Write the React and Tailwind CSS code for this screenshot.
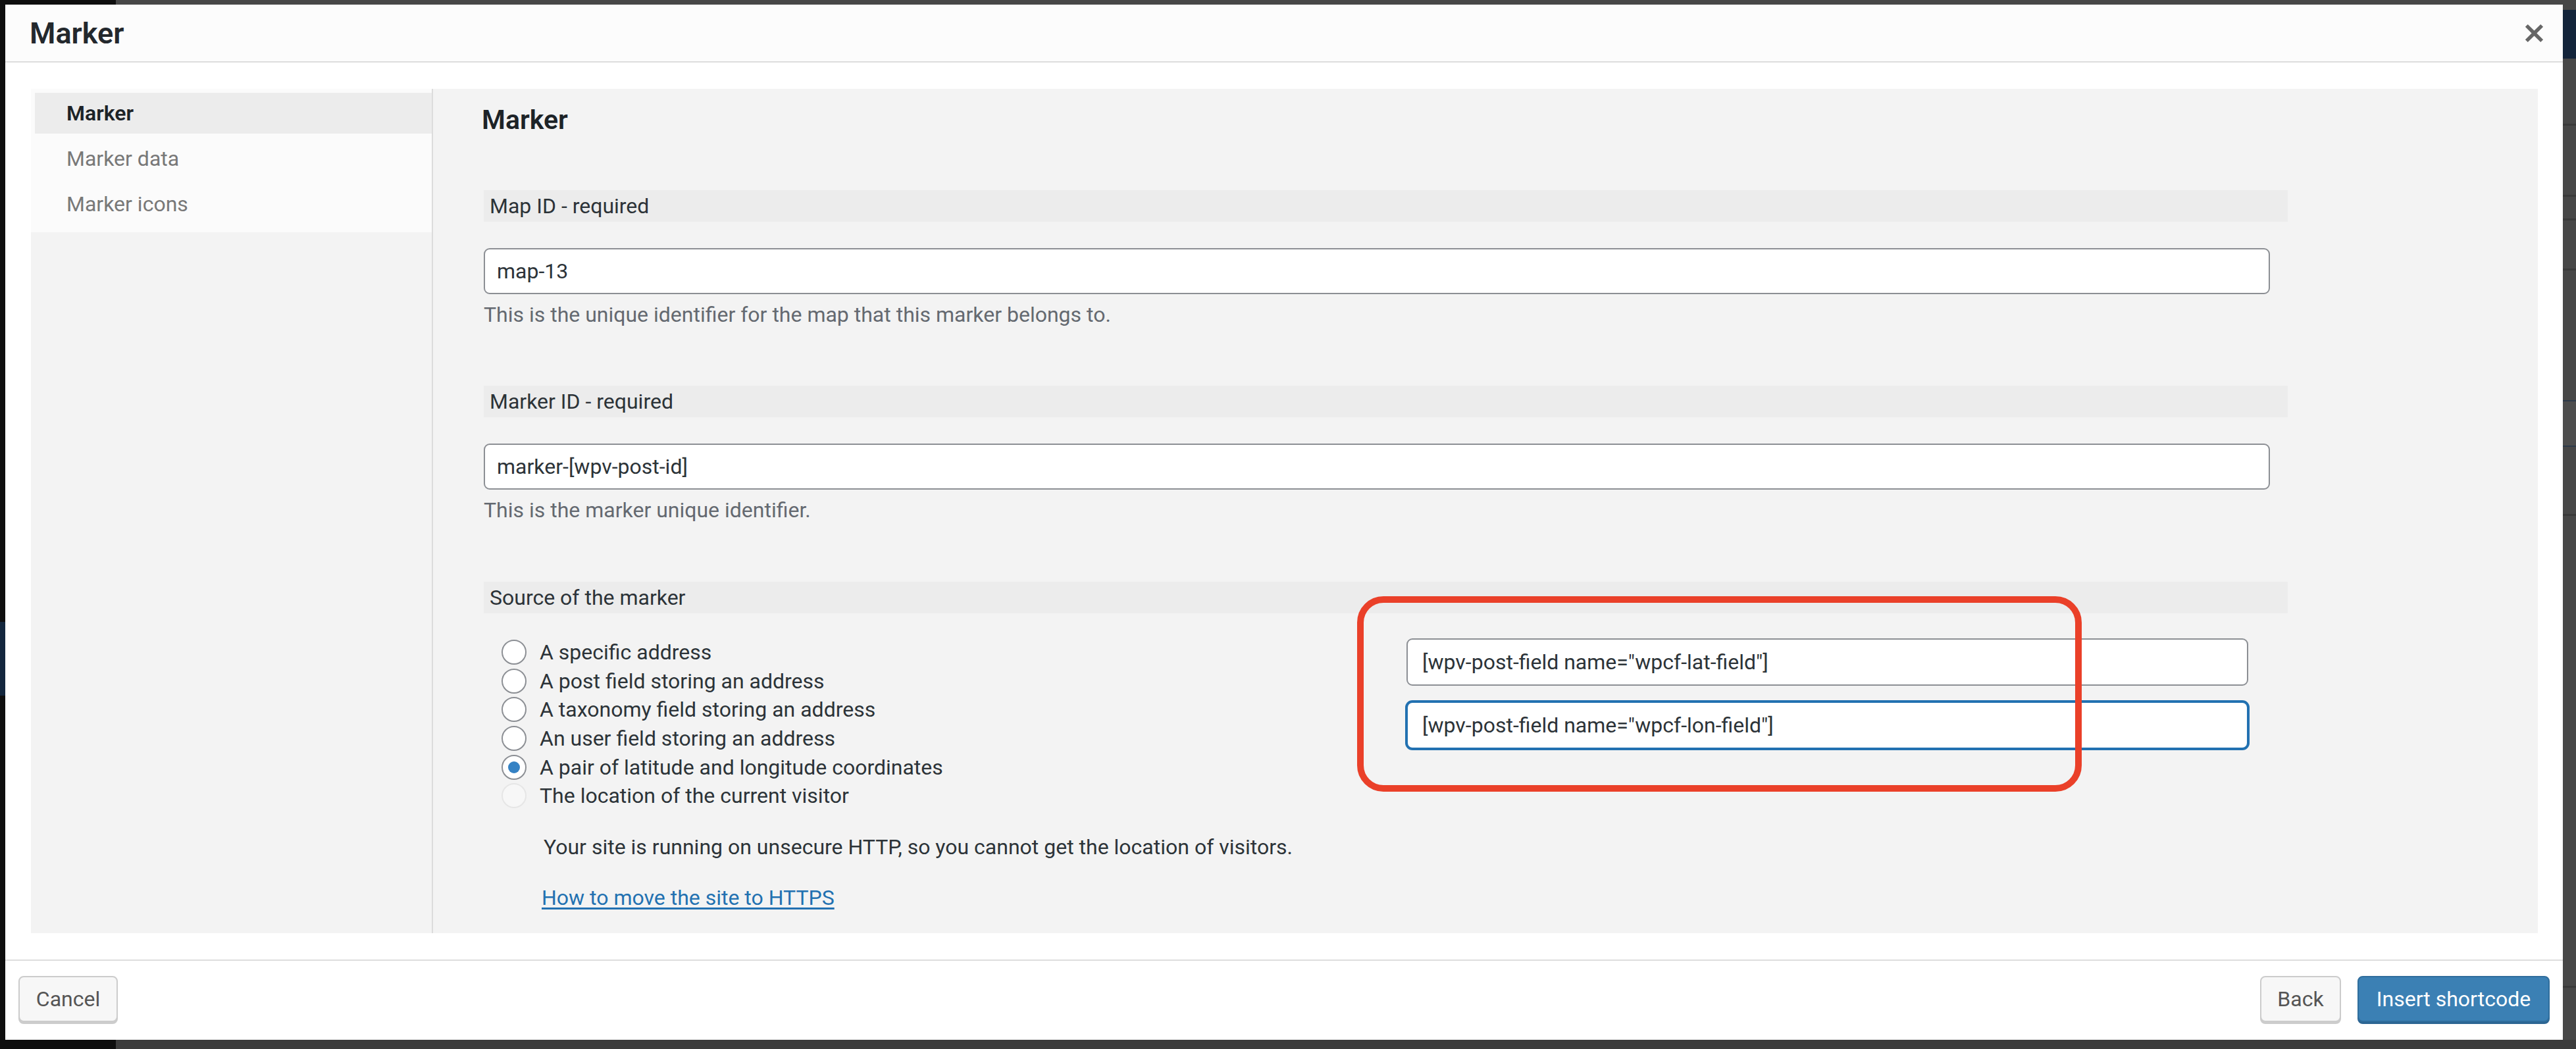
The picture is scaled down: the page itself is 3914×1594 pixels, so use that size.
export default function App() {
  const radios = [
    { label: "A specific address", state: "off" },
    { label: "A post field storing an address", state: "off" },
    { label: "A taxonomy field storing an address", state: "off" },
    { label: "An user field storing an address", state: "off" },
    { label: "A pair of latitude and longitude coordinates", state: "on" },
    { label: "The location of the current visitor", state: "disabled" },
  ];

  return (
    <div className="relative w-[3914px] h-[1594px] overflow-hidden bg-[#474747] font-[Roboto,'Liberation_Sans',sans-serif]">
      {/* page behind the dialog */}
      <div className="absolute left-0 top-0 h-full w-[176px] bg-[#0e0e0e]" />
      <div className="absolute left-0 top-[945px] h-[112px] w-[8px] bg-[#13263d]" />
      <div className="absolute left-[176px] right-0 bottom-0 h-[14px] bg-[#3c3c3c]" />
      <div className="absolute right-0 top-[15px] h-[74px] w-[20px] bg-[#13243a]" />
      <div className="absolute right-0 top-[188px] h-[3px] w-[20px] bg-[#3a3a3a]" />
      <div className="absolute right-0 top-[296px] h-[3px] w-[20px] bg-[#3a3a3a]" />
      <div className="absolute right-0 top-[332px] h-[3px] w-[20px] bg-[#3a3a3a]" />
      <div className="absolute right-0 top-[408px] h-[3px] w-[20px] bg-[#3a3a3a]" />
      <div className="absolute right-0 top-[608px] h-[71px] w-[20px] border-y-2 border-[#2d3a4a] bg-[#4d4d4d]" />
      <div className="absolute right-0 top-[781px] h-[3px] w-[20px] bg-[#3a3a3a]" />
      <div className="absolute right-0 top-[1498px] h-[3px] w-[20px] bg-[#3a3a3a]" />

      {/* dialog */}
      <div className="absolute left-[8px] top-[7px] flex h-[1573px] w-[3886px] flex-col bg-white">
        {/* header */}
        <div className="flex h-[88px] shrink-0 items-center justify-between border-b-2 border-[#dddddd] bg-[#fcfcfc] pl-[37px] pr-[16px]">
          <h1 className="text-[45px] font-semibold leading-none text-[#23282d]">Marker</h1>
          <svg width="55" height="55" viewBox="0 0 20 20" className="fill-[#666666]">
            <path d="M14.95 6.46L11.41 10l3.54 3.54-1.41 1.41L10 11.42l-3.53 3.53-1.42-1.42L8.58 10 5.05 6.47l1.42-1.42L10 8.58l3.54-3.53z" />
          </svg>
        </div>

        {/* body */}
        <div className="flex min-h-0 flex-1 pl-[39px] pr-[38px] pt-[40px] pb-[40px]">
          <div className="flex flex-1 bg-[#f3f3f3]">
            {/* sidebar */}
            <div className="w-[611px] shrink-0 border-r-2 border-[#dcdcdc]">
              <div className="flex flex-col gap-[7px] bg-[#fbfbfb] pt-[6px] pl-[6px] pb-[12px]">
                <div className="flex h-[62px] items-center bg-[#ececec] pl-[48px] text-[32px] font-semibold text-[#1d2327]">
                  Marker
                </div>
                <div className="flex h-[62px] items-center pl-[48px] text-[32px] text-[#787878]">
                  Marker data
                </div>
                <div className="flex h-[62px] items-center pl-[48px] text-[32px] text-[#787878]">
                  Marker icons
                </div>
              </div>
            </div>

            {/* content */}
            <div className="flex flex-1 flex-col pl-[77px] pt-[22px]">
              <h2 className="-ml-[3px] h-[50px] text-[41px] font-semibold leading-[50px] text-[#1d2327]">Marker</h2>

              <div className="mt-[82px] flex h-[48px] w-[2741px] items-center bg-[#ececec] pl-[9px] text-[32px] text-[#2c3338]">
                Map ID - required
              </div>
              <input
                type="text"
                readOnly
                defaultValue="map-13"
                className="mt-[40px] h-[70px] w-[2714px] rounded-[9px] border-2 border-[#8c8f94] bg-white px-[18px] text-[32px] text-[#2c3338] outline-none"
              />
              <p className="mt-[11px] text-[32px] leading-[40px] text-[#646970]">
                This is the unique identifier for the map that this marker belongs to.
              </p>

              <div className="mt-[88px] flex h-[48px] w-[2741px] items-center bg-[#ececec] pl-[9px] text-[32px] text-[#2c3338]">
                Marker ID - required
              </div>
              <input
                type="text"
                readOnly
                defaultValue="marker-[wpv-post-id]"
                className="mt-[40px] h-[70px] w-[2714px] rounded-[9px] border-2 border-[#8c8f94] bg-white px-[18px] text-[32px] text-[#2c3338] outline-none"
              />
              <p className="mt-[11px] text-[32px] leading-[40px] text-[#646970]">This is the marker unique identifier.</p>

              <div className="mt-[89px] flex h-[48px] w-[2741px] items-center bg-[#ececec] pl-[9px] text-[32px] text-[#2c3338]">
                Source of the marker
              </div>

              <div className="relative mt-[37px] flex">
                <div className="flex w-[1402px] shrink-0 flex-col">
                  {radios.map((r) => (
                    <div key={r.label} className="flex h-[43.7px] items-center gap-[20px] pl-[27px] text-[32px] text-[#2c3338]">
                      {r.state === "disabled" ? (
                        <span className="h-[38px] w-[38px] shrink-0 rounded-full border-2 border-[#e6e6e6] bg-[#f7f7f7]" />
                      ) : (
                        <span className="flex h-[38px] w-[38px] shrink-0 items-center justify-center rounded-full border-2 border-[#8c8f94] bg-white">
                          {r.state === "on" && <span className="h-[18px] w-[18px] rounded-full bg-[#3582c4]" />}
                        </span>
                      )}
                      <span>{r.label}</span>
                    </div>
                  ))}
                </div>
                <div className="flex w-[1279px] flex-col gap-[24px] pt-[1px]">
                  <input
                    type="text"
                    readOnly
                    defaultValue={'[wpv-post-field name="wpcf-lat-field"]'}
                    className="h-[72px] w-full rounded-[9px] border-2 border-[#8c8f94] bg-white px-[22px] text-[32px] text-[#2c3338] outline-none"
                  />
                  <input
                    type="text"
                    readOnly
                    defaultValue={'[wpv-post-field name="wpcf-lon-field"]'}
                    className="h-[72px] w-full rounded-[9px] border-2 border-[#2271b1] bg-white px-[22px] text-[32px] text-[#2c3338] shadow-[0_0_0_2px_#2271b1] outline-none"
                  />
                </div>
                {/* annotation */}
                <div className="pointer-events-none absolute left-[1327px] top-[-63px] h-[297px] w-[1101px] rounded-[40px] border-[10px] border-[#ea4029]" />
              </div>

              <p className="ml-[91px] mt-[36px] text-[32px] leading-[40px] text-[#2c3338]">
                Your site is running on unsecure HTTP, so you cannot get the location of visitors.
              </p>
              <a href="#" className="ml-[88px] mt-[37px] w-fit text-[32px] leading-[40px] text-[#2271b1] underline underline-offset-[4px]">
                How to move the site to HTTPS
              </a>
            </div>
          </div>
        </div>

        {/* footer */}
        <div className="flex h-[122px] shrink-0 items-center justify-between border-t-2 border-[#dddddd] px-[20px] pb-[4px]">
          <button className="h-[70px] w-[151px] rounded-[8px] border-2 border-[#cccccc] bg-[#f7f7f7] text-[32px] text-[#555555] shadow-[0_3px_0_#cccccc]">
            Cancel
          </button>
          <div className="flex gap-[25px]">
            <button className="h-[70px] w-[123px] rounded-[8px] border-2 border-[#cccccc] bg-[#f7f7f7] text-[32px] text-[#555555] shadow-[0_3px_0_#cccccc]">
              Back
            </button>
            <button className="h-[70px] w-[292px] rounded-[8px] border-2 border-[#2f6d9c] bg-[#3b80b4] text-[32px] text-white shadow-[0_3px_0_#2c6592]">
              Insert shortcode
            </button>
          </div>
        </div>
      </div>
    </div>
  );
}
